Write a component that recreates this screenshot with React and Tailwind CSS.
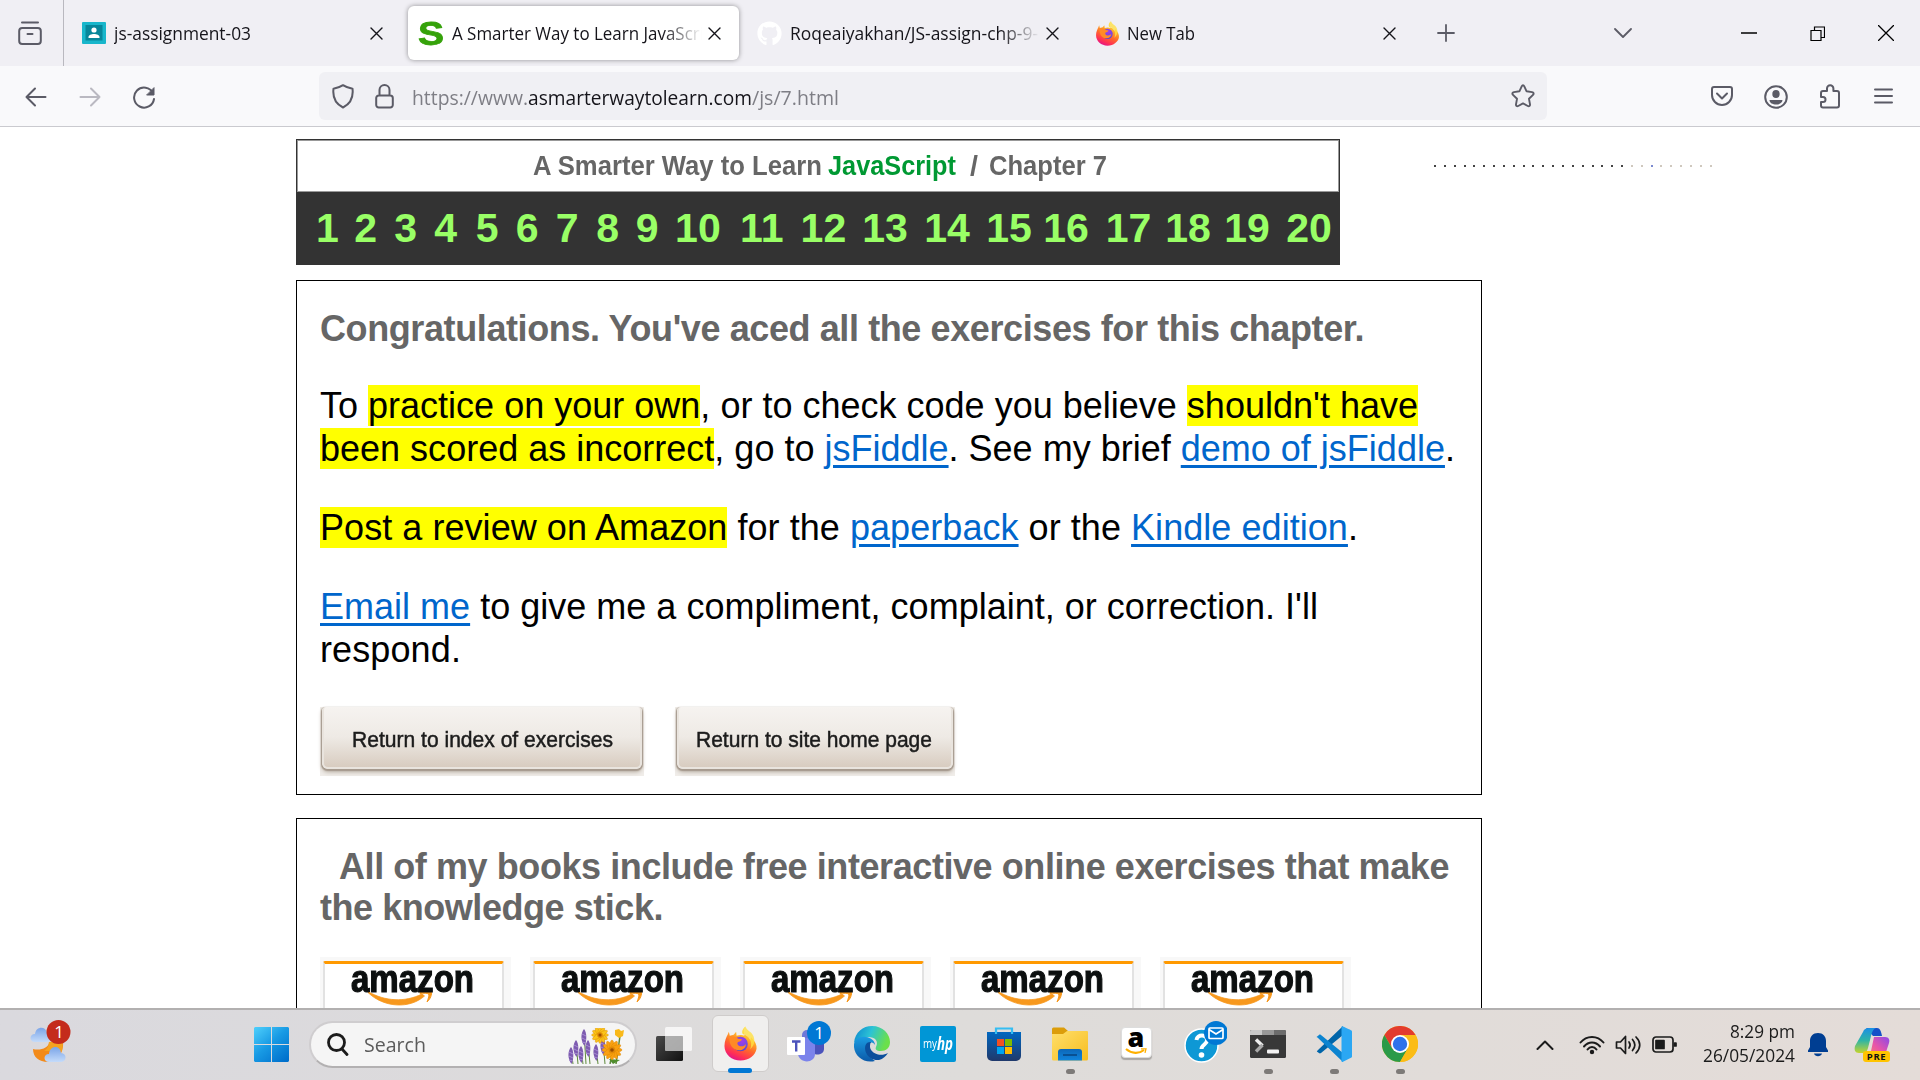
import React, { useLayoutEffect, useRef, useState } from "react";
import { FaGithub } from "react-icons/fa";

/* Text run set to a fixed width, by tracking or by horizontal stretch. */
function Fit({ w, stretch, className = "", children }) {
  const ref = useRef(null);
  const [style, setStyle] = useState({});
  useLayoutEffect(() => {
    const el = ref.current;
    const natural = el.getBoundingClientRect().width;
    if (stretch) setStyle({ transform: `scaleX(${w / natural})` });
    else setStyle({ letterSpacing: `${(w - natural) / el.textContent.length}px` });
  }, [w, stretch]);
  return (
    <span className={`block shrink-0 whitespace-pre ${className}`} style={{ width: w }}>
      <span ref={ref} className="inline-block origin-left" style={style}>{children}</span>
    </span>
  );
}

function Icon({ w, h, box, className = "", children, sw = 1.8 }) {
  return (
    <svg width={w} height={h} viewBox={box || `0 0 ${w} ${h}`} preserveAspectRatio="none" fill="none" stroke="currentColor" strokeWidth={sw} strokeLinecap="round" strokeLinejoin="round" className={`block shrink-0 ${className}`}>
      {children}
    </svg>
  );
}

function Firefox({ size, id }) {
  return (
    <svg width={size} height={size} viewBox="0 0 36 36" className="block shrink-0">
      <defs>
        <linearGradient id={id} x1="0.8" y1="0" x2="0.35" y2="1">
          <stop offset="0" stopColor="#fff44f" />
          <stop offset="0.35" stopColor="#ffb02a" />
          <stop offset="0.6" stopColor="#ff6a2a" />
          <stop offset="0.85" stopColor="#ff2f55" />
          <stop offset="1" stopColor="#e31587" />
        </linearGradient>
        <radialGradient id={id + "b"} cx="0.6" cy="0.3" r="0.8">
          <stop offset="0" stopColor="#a33be8" />
          <stop offset="0.6" stopColor="#6a4be0" />
          <stop offset="1" stopColor="#4a3fb8" />
        </radialGradient>
      </defs>
      <path d="M23 .5c-3 3-3.500 6-2 8 4 1 6 3 7 6l1-3c4 4 6 8 5.500 12C33.500 30 27 35.500 18 35.500S1.500 29 1.500 20.500c0-5 2-9 3.500-12L6 6l1 4 4-1 2.500-3 .5 4c3-1 6-1 8 0-1-4-1-7 1-9.500z" fill={`url(#${id})`} />
      <circle cx="18" cy="18.500" r="7.500" fill={`url(#${id}b)`} />
      <path d="M6.500 11c3-1 7 0 9 2l4 .5c-.5 2-3 2.500-4 3-1 1-1 2.500.5 3.500 3 2 6 .5 7.500-1.500 0 4-3 6.500-7 6.500C10 25 6 19 6.500 11z" fill="#ff8a26" />
      <path d="M20 8c7 2 11 8 8 16 6-5 5-13 1-17-3-2-5-4-6-6.500C20 3 19 6 20 8z" fill="#ffe045" opacity=".8" />
    </svg>
  );
}

function Tab({ active, icon, title, w, fade }) {
  return (
    <div className={`mr-[7px] flex h-[54px] w-[331px] items-center rounded-[6px] pl-3 ${active ? "bg-white shadow-[0_0_5px_rgba(0,0,0,0.4)]" : ""}`}>
      <div className="flex w-6 justify-center">{icon}</div>
      <div className={`ml-2 w-[250px] overflow-hidden leading-6 ${fade ? "[mask-image:linear-gradient(to_right,black_84%,transparent_100%)]" : ""}`}>
        <Fit w={w} stretch className="text-[17.500px]">{title}</Fit>
      </div>
      <Icon w={13} h={13} className="ml-[6px] text-[#15141a]" sw={1.4}>
        <path d="M1 1l11 11M12 1L1 12" />
      </Icon>
    </div>
  );
}

function TabStrip() {
  return (
    <div className="flex h-[66px] items-center bg-[#f0eff4]">
      <div className="flex h-full w-16 items-center border-r border-[#b9b8bf] pl-[18px]">
        <Icon w={24} h={24} className="text-[#5b5b66]" sw={2}>
          <path d="M4 1.500h16M1.200 10a3 3 0 0 1 3-3h15.600a3 3 0 0 1 3 3v10a3 3 0 0 1-3 3H4.200a3 3 0 0 1-3-3zM9.500 13h5" />
        </Icon>
      </div>
      <div className="ml-[6px] flex">
        <Tab
          title="js-assignment-03"
          w={137}
          icon={
            <svg width="24" height="22" viewBox="0 0 24 22">
              <rect width="24" height="22" rx="1" fill="#18b6cb" />
              <rect x="3.500" y="3" width="17" height="15.500" fill="#07869a" />
              <circle cx="12" cy="8" r="2.600" fill="#fff" />
              <path d="M6.500 15c0-4 11-4 11 0v1h-11z" fill="#fff" />
            </svg>
          }
        />
        <Tab active fade title="A Smarter Way to Learn JavaScri" w={252} icon={<Fit w={26} stretch className="-ml-[2px] text-[34px] leading-6 font-bold text-[#35a20a] [-webkit-text-stroke:0.8px_#35a20a] [font-family:'Liberation_Sans',sans-serif]">S</Fit>} />
        <Tab fade title="Roqeaiyakhan/JS-assign-chp-9-1" w={258} icon={<FaGithub size={25} color="#fff" className="-ml-[2px]" />} />
        <div className="-ml-px">
          <Tab title="New Tab" w={68} icon={<Firefox size={25} id="ffa" />} />
        </div>
      </div>
      <Icon w={18} h={18} className="ml-[16px] text-[#5b5b66]"><path d="M9 1v16M1 9h16" /></Icon>
      <Icon w={18} h={10} className="ml-[159px] text-[#5b5b66]"><path d="M1 1l8 8 8-8" /></Icon>
      <Icon w={16} h={2} className="ml-[109px] text-black" sw={1.3}><path d="M0 1h16" /></Icon>
      <Icon w={15} h={15} className="ml-[53px] text-black" sw={1.2}><path d="M1 4.500h10v10H1zM4.500 4.500v-3.500h10v10.500H11" strokeLinejoin="miter" /></Icon>
      <Icon w={16} h={16} className="ml-[53px] text-black" sw={1.3}><path d="M.5.5l15 15M15.500.5l-15 15" /></Icon>
    </div>
  );
}

function Toolbar() {
  return (
    <div className="flex h-[61px] items-center border-b border-[#cacacf] bg-[#f9f9fb] text-[#5b5b66]">
      <Icon w={22} h={20} className="mt-[2px] ml-[25px]" sw={2}><path d="M1.500 10h19M10 1.500L1.500 10l8.500 8.500" /></Icon>
      <Icon w={22} h={20} className="mt-[2px] ml-[32px] text-[#bab9c1]" sw={2}><path d="M1.500 10h19M12 1.500l8.500 8.500-8.500 8.500" /></Icon>
      <Icon w={24} h={24} className="mt-[3px] ml-[31px]" sw={2}>
        <path d="M21 7a10 10 0 1 0 1 6" />
        <path d="M22 2v7h-7z" fill="currentColor" strokeWidth="1" />
      </Icon>
      <div className="ml-[163px] flex h-12 w-[1228px] items-center rounded-[6px] bg-[#f0f0f4]">
        <Icon w={22} h={25} className="ml-[13px]" sw={2}><path d="M11 1.200c3 2 6 3 9.500 3.500C21.500 13 18 20 11 23.500 4 20 .5 13 1.500 4.700 5 4.200 8 3.200 11 1.200z" /></Icon>
        <Icon w={19} h={25} className="ml-[21px]" sw={2}><path d="M1.200 14a2.500 2.500 0 0 1 2.500-2.500h11.600a2.500 2.500 0 0 1 2.500 2.500v7a2.500 2.500 0 0 1-2.500 2.500H3.700A2.500 2.500 0 0 1 1.200 21zM4.500 11V6a5 5 0 0 1 10 0v5" /></Icon>
        <div className="mt-[3px] ml-[18px] flex text-[20px] leading-8 text-[#7e7e85]">
          <Fit w={116} stretch>https://www.</Fit>
          <Fit w={224} stretch className="text-[#15141a]">asmarterwaytolearn.com</Fit>
          <Fit w={87} stretch>/js/7.html</Fit>
        </div>
        <Icon w={24} h={24} className="mr-3 ml-auto" sw={1.900}><path d="M12 1.300c.6 0 1 .4 1.300 1l2.300 5 5.500.8c1.500.2 2 1.700.9 2.800l-4 3.900 1 5.600c.2 1.500-1 2.200-2.200 1.600L12 19.400 7.200 22c-1.200.6-2.400-.1-2.200-1.600l1-5.600-4-3.900c-1.100-1.100-.6-2.600.9-2.800l5.500-.8 2.300-5c.3-.6.7-1 1.300-1z" /></Icon>
      </div>
      <Icon w={22} h={20} className="ml-[164px]" sw={2}><path d="M3 1h16a2 2 0 0 1 2 2v6a10 10 0 0 1-20 0V3a2 2 0 0 1 2-2zM6 7.500l5 5 5-5" /></Icon>
      <Icon w={24} h={24} className="mt-px ml-[31px]" sw={2}>
        <circle cx="12" cy="12" r="10.800" />
        <ellipse cx="12" cy="9" rx="3.700" ry="4" fill="currentColor" stroke="none" />
        <path d="M5.500 15h13c0 6-13 6-13 0z" fill="currentColor" stroke="none" />
      </Icon>
      <Icon w={22} h={25} className="ml-[31px]" sw={2}><path d="M2 13V9a2 2 0 0 1 2-2h4V4.500a3.200 3.200 0 0 1 6.400 0V7H18a2 2 0 0 1 2 2v12.500a2 2 0 0 1-2 2H4a2 2 0 0 1-2-2V18h2a2.500 2.500 0 0 0 0-5z" /></Icon>
      <Icon w={19} h={16} className="ml-[33px]" sw={2}><path d="M1 1.500h17M1 8h17M1 14.500h17" /></Icon>
    </div>
  );
}

/* number, width of its cell */
const CHAPTERS = [
  [1, 38.300], [2, 40], [3, 40], [4, 41.500], [5, 40], [6, 40], [7, 40.500], [8, 39.500], [9, 39.300], [10, 65], [11, 60.500],
  [12, 61.600], [13, 62], [14, 62], [15, 57], [16, 62.500], [17, 59.500], [18, 59], [19, 62], [20, 49],
];

function ChapterHeader() {
  return (
    <div className="h-[126px] w-[1044px] border border-[#333] bg-[#333]">
      <div className="flex h-[52px] items-center border border-[#999] bg-white pl-[235px] text-[28px] leading-8 font-bold text-[#666]">
        <Fit w={289} stretch>A Smarter Way to Learn</Fit>
        <Fit w={128} stretch className="ml-[6px] text-[#009933]">JavaScript</Fit>
        <Fit w={8} stretch className="ml-[14px]">/</Fit>
        <Fit w={118} stretch className="ml-[11px]">Chapter 7</Fit>
      </div>
      <div className="flex h-[72px] items-center pl-[19px] text-[41px] leading-[72px] font-bold text-[#99ff66]">
        {CHAPTERS.map(([n, w]) => (
          <a key={n} className="shrink-0" style={{ width: w }}>{n}</a>
        ))}
      </div>
    </div>
  );
}

const Mark = ({ children }) => <span className="bg-[#ffff00]">{children}</span>;
const Link = ({ children }) => <a className="text-[#0066cc] underline decoration-[3px] underline-offset-[4px]">{children}</a>;

function StoneButton({ children, w, textW, pad }) {
  return (
    <div className="h-[69px] bg-[#f0ede9] px-[2px]" style={{ width: w }}>
      <div className="flex h-[62px] items-center rounded-b-[6px] rounded-t-[4px] border-x-2 border-b-2 border-[#e9e4de] bg-linear-to-b from-[#f6f3f0] via-[#eeeae5] to-[#d8ccc0] shadow-[0_1px_1px_0.5px_#a69a8e,0_3px_4px_#b5aa9e]" style={{ paddingLeft: pad }}>
        <Fit w={textW} stretch className="pt-[5px] text-[22.500px] leading-7 text-[#1c1c1c] [-webkit-text-stroke:0.5px_#1c1c1c]">{children}</Fit>
      </div>
    </div>
  );
}

function AmazonBadge() {
  return (
    <div className="h-[51px] w-[191px] overflow-hidden bg-[#f8f8f8] pt-1 pl-[3px]">
      <div className="h-[60px] w-[181px] rounded-[2px] border-x-2 border-t-[3px] border-x-[#e2e2e2] border-t-[#ff9900] bg-white pl-[26px]">
        <Fit w={123} stretch className="mt-[-1px] h-[27px] text-[38px] leading-[32px] font-bold text-[#0c0f0f] [-webkit-text-stroke:1.2px_#0c0f0f]">amazon</Fit>
        <svg width="66" height="17" viewBox="0 0 66 17" className="ml-[17px] block">
          <path d="M0 1.500c17 10 37 11 54 2.500l2.500 2C42 19 16 18 0 2.500z" fill="#f7981d" stroke="#f7981d" strokeWidth=".8" />
          <path d="M52 2c5-2.500 11-2 11.500-.5.500 3-1 7.500-4.500 10.500 1.500-4 2.500-7 1.500-8-1-1-5-.8-8.500-.5z" fill="#f7981d" stroke="#f7981d" />
        </svg>
      </div>
    </div>
  );
}

function Page() {
  return (
    <div className="h-[881px] overflow-hidden bg-white pt-3 pl-[296px] [font-family:'Liberation_Sans',Arial,sans-serif]">
      <div className="flex">
        <ChapterHeader />
        <div className="mt-[26px] ml-[94px] flex h-[2px] w-[278px] justify-between">
          {Array.from({ length: 29 }, (_, i) => (
            <i key={i} className={`h-[2px] w-[2px] ${i < 20 ? "bg-[#444]" : i === 22 ? "bg-[#7b8ad0]" : "bg-[#cfc8be]"}`} />
          ))}
        </div>
      </div>
      <div className="mt-[15px] h-[515px] w-[1186px] border border-black pt-[26px] pl-[23px]">
        <h2 className="pt-px text-[36px] leading-[41px] font-bold text-[#666]">
          <Fit w={1044}>Congratulations. You've aced all the exercises for this chapter.</Fit>
        </h2>
        <div className="mt-[35px] flex flex-col gap-9 text-[36px] leading-[43px] text-black">
          <div>
            <Fit w={1098}>To <Mark>practice on your own</Mark>, or to check code you believe <Mark>shouldn't have</Mark></Fit>
            <Fit w={1135}><Mark>been scored as incorrect</Mark>, go to <Link>jsFiddle</Link>. See my brief <Link>demo of jsFiddle</Link>.</Fit>
          </div>
          <Fit w={1038}><Mark>Post a review on Amazon</Mark> for the <Link>paperback</Link> or the <Link>Kindle edition</Link>.</Fit>
          <div>
            <Fit w={998}><Link>Email me</Link> to give me a compliment, complaint, or correction. I'll</Fit>
            <Fit w={141}>respond.</Fit>
          </div>
        </div>
        <div className="mt-9 flex gap-[31px]">
          <StoneButton w={324} textW={261} pad={28}>Return to index of exercises</StoneButton>
          <StoneButton w={280} textW={236} pad={17}>Return to site home page</StoneButton>
        </div>
      </div>
      <div className="mt-[23px] h-[300px] w-[1186px] border border-black pt-[26px] pl-[23px]">
        <h2 className="pt-px text-[36px] leading-[41px] font-bold text-[#666]">
          <Fit w={1110} className="ml-[19px]">All of my books include free interactive online exercises that make</Fit>
          <Fit w={343}>the knowledge stick.</Fit>
        </h2>
        <div className="mt-[29px] flex gap-[19px]">
          {[1, 2, 3, 4, 5].map((n) => <AmazonBadge key={n} />)}
        </div>
      </div>
    </div>
  );
}

const Slot = ({ children, running }) => (
  <div className="relative flex h-14 w-[66px] items-center justify-center">
    {children}
    {running && <span className="absolute -bottom-[2px] h-[5px] w-[9px] rounded-full bg-[#7d7a78]" />}
  </div>
);

const petals = [0, 30, 60, 90, 120, 150];
function Flower({ x, y, r, c }) {
  return (
    <g transform={`translate(${x} ${y})`}>
      {petals.map((a) => <ellipse key={a} rx={r} ry={r * 0.27} transform={`rotate(${a})`} fill={c} stroke="#d98600" strokeWidth=".4" />)}
      <circle r={r * 0.33} fill="#e08a08" />
      <circle r={r * 0.18} fill="#9a4d00" />
    </g>
  );
}

function SearchBox() {
  return (
    <div className="ml-[20px] flex h-[47px] w-[328px] items-center rounded-full border-2 border-[#cfcdcf] border-b-[#b3b1b2] bg-[#f5f5f5] pl-[15px]">
      <Icon w={23} h={23} className="text-[#1b1b1b]" sw={2.800}><circle cx="10.500" cy="9.500" r="8" /><path d="M16 16l5 5.500" /></Icon>
      <Fit w={62} stretch className="ml-[15px] text-[20px] leading-7 text-[#5c5c5c]">Search</Fit>
      <svg width="60" height="36" viewBox="0 0 60 36" className="mt-[3px] ml-[141px] block">
        {[[4, 22], [9, 15], [17, 4], [14, 21], [21, 15], [29, 19], [36, 13]].map(([x, y], i) => (
          <g key={i}>
            <path d={`M${x} ${y}L${x + 2} 36`} stroke="#5f8a3c" strokeWidth="1" />
            <path d={`M${x} ${y - 3}c3 3 3 12 .5 17-4-5-4-13-.5-17z`} fill="#7d5bb0" />
            <path d={`M${x - 2} ${y + 2}l4 2M${x - 2} ${y + 6}l4 2M${x - 2} ${y + 10}l4 1`} stroke="#a58ad2" strokeWidth="1" />
          </g>
        ))}
        <path d="M46 22l-3 14M53 8l-4 28" stroke="#5f8a3c" strokeWidth="1.500" />
        <path d="M42 31l4 5 7-4" fill="#4f8d2d" />
        <Flower x={33} y={7} r={8.500} c="#fbc418" />
        <path d="M48 2l4-1 2 2 3-1-1 6-4 2-4-3z" fill="#f9b91a" />
        <Flower x={45} y={22} r={10} c="#f9a010" />
      </svg>
    </div>
  );
}

function TaskIcons() {
  return (
    <div className="mb-[2px] ml-[4px] flex items-center">
      <Slot>
        <svg width="36" height="35" viewBox="0 0 36 35">
          <defs>
            <linearGradient id="tv" x1="0" y1="0" x2="1" y2="1"><stop stopColor="#4a4a4a" /><stop offset="1" stopColor="#111" /></linearGradient>
          </defs>
          <rect y="10" width="27" height="25" rx="1.500" fill="url(#tv)" />
          <rect x="9" y="1" width="27" height="24" rx="1.500" fill="#fff" opacity=".72" />
          <path d="M9 10h18v15H9z" fill="#999" opacity=".55" />
        </svg>
      </Slot>
      <div className="relative flex h-14 w-[66px] items-center justify-center">
        <div className="flex h-[57px] w-[57px] items-center justify-center rounded-[6px] border border-[#cfcccb] bg-[#f0efee]"><Firefox size={35} id="ffb" /></div>
        <span className="absolute -bottom-[1px] h-[5px] w-6 rounded-full bg-[#0078d4]" />
      </div>
      <Slot>
        <svg width="46" height="46" viewBox="0 0 46 46" className="mb-[5px] ml-[4px]">
          <path d="M27 18h12v13c0 7-12 7-12 2z" fill="#4b53bc" />
          <rect x="17" y="12" width="14" height="13" rx="5" fill="#6f78d8" />
          <path d="M13 20h17v16c0 10-17 10-17-1z" fill="#7b83eb" />
          <rect x="2" y="19" width="18" height="18" rx="1" fill="#fff" />
          <path d="M7 23.500h8.500M11.200 23.500v10" stroke="#4b53bc" strokeWidth="2.400" />
          <circle cx="34" cy="15" r="12" fill="#0078d4" />
          <text x="34" y="21" textAnchor="middle" fill="#fff" fontSize="17" fontFamily="Open Sans">1</text>
        </svg>
      </Slot>
      <Slot>
        <svg width="36" height="36" viewBox="0 0 36 36">
          <defs>
            <linearGradient id="e1" x1="0" y1="0" x2="1" y2=".3"><stop stopColor="#0a84d0" /><stop offset=".5" stopColor="#2cc3d5" /><stop offset="1" stopColor="#6be04b" /></linearGradient>
            <linearGradient id="e2" x1="0" y1="0" x2="0" y2="1"><stop stopColor="#1b9de2" /><stop offset="1" stopColor="#0b59a8" /></linearGradient>
          </defs>
          <path d="M0 17C1 6 9 0 18 0c11 0 18 8 18 16 0 6-4 9-9 9-5 0-6-2-5-4 3-6-1-10-8-10C7 11 2 14 0 17z" fill="url(#e1)" />
          <path d="M0 18c1-5 6-8 12-7 5 .5 9 4 9 8-1-2-3-3-5-2-5 2-4 12 5 18C9 38-1 29 0 18z" fill="url(#e2)" />
          <path d="M13 17c-5 5 0 18 12 17 4-1 7-4 9-7-7 4-17 1-18-6 0-2 0-3 1-5-1 0-3 0-4 1z" fill="#0c4f9c" />
        </svg>
      </Slot>
      <Slot>
        <div className="flex h-9 w-9 items-center rounded-[2px] bg-[#0096d6] pl-[3px] text-white">
          <Fit w={14} stretch className="text-[12px] leading-4">my</Fit>
          <Fit w={16} stretch className="text-[17px] leading-5 font-bold italic">hp</Fit>
        </div>
      </Slot>
      <Slot>
        <svg width="36" height="36" viewBox="0 0 36 36">
          <defs><linearGradient id="st" x1="0" y1="0" x2="0" y2="1"><stop stopColor="#0067c0" /><stop offset="1" stopColor="#20396b" /></linearGradient></defs>
          <path d="M10 8V2.500h16V8" fill="none" stroke="#35bdf2" strokeWidth="2.200" />
          <path d="M1 6h34v24a5 5 0 0 1-5 5H6a5 5 0 0 1-5-5z" fill="url(#st)" />
          <path d="M10 8V5.500M26 8V5.500" stroke="#35bdf2" strokeWidth="2.200" />
          <path d="M11 13h7v7h-7z" fill="#f25022" /><path d="M19 13h7v7h-7z" fill="#7fba00" /><path d="M11 21h7v7h-7z" fill="#00a4ef" /><path d="M19 21h7v7h-7z" fill="#ffb900" />
        </svg>
      </Slot>
      <Slot running>
        <svg width="36" height="34" viewBox="0 0 36 34">
          <defs>
            <linearGradient id="fo" x1="0" y1="0" x2="1" y2="1"><stop stopColor="#ffdf6b" /><stop offset="1" stopColor="#f7bd1f" /></linearGradient>
            <linearGradient id="fb" x1="0" y1="0" x2="0" y2="1"><stop stopColor="#0d67b8" /><stop offset="1" stopColor="#1085dd" /></linearGradient>
          </defs>
          <path d="M0 2a1.500 1.500 0 0 1 1.500-1.500H12L16 4v6H0z" fill="#dc9d0a" />
          <path d="M0 7h11l4-3h20a1 1 0 0 1 1 1v27a1.500 1.500 0 0 1-1.500 1.500h-33A1.500 1.500 0 0 1 0 32z" fill="url(#fo)" />
          <path d="M6 33.500V25a3 3 0 0 1 3-3h18a3 3 0 0 1 3 3v8.500z" fill="url(#fb)" />
          <path d="M11 28h14" stroke="#08457f" strokeWidth="1.500" />
        </svg>
      </Slot>
      <Slot>
        <div className="mb-[3px] flex h-[31px] w-[31px] flex-col items-center rounded-[4px] border border-[#ddd] bg-white shadow-[0_2px_1px_#a9a6a4]">
          <span className="mt-[-3px] h-[23px] text-[27px] leading-[23px] font-black text-black">a</span>
          <svg width="22" height="8" viewBox="0 0 22 8" className="block"><path d="M1 1c6 5 13 5 18 1" stroke="#ffb000" strokeWidth="2.200" fill="none" /><path d="M16 .8h5l-1 4" stroke="#ffb000" strokeWidth="1.300" fill="none" /></svg>
        </div>
      </Slot>
      <Slot>
        <svg width="46" height="46" viewBox="0 0 46 46" className="mb-[5px] ml-[4px]">
          <circle cx="20.500" cy="27.500" r="16.500" fill="#0e98d5" stroke="#fff" strokeWidth="1.500" />
          <path d="M15.500 22c.5-6 11-6 10.500.5 0 4-5.500 4-5.500 8.500" fill="none" stroke="#fff" strokeWidth="4" />
          <circle cx="20.500" cy="37" r="2.800" fill="#fff" />
          <circle cx="35" cy="15" r="12" fill="#0078d4" />
          <rect x="28" y="10" width="14" height="10.500" rx="1" fill="none" stroke="#fff" strokeWidth="1.700" />
          <path d="M28 11.500l7 4.500 7-4.500" fill="none" stroke="#fff" strokeWidth="1.700" />
        </svg>
      </Slot>
      <Slot running>
        <svg width="36" height="28" viewBox="0 0 36 28">
          <rect width="36" height="28" rx="1.500" fill="#383838" />
          <path d="M0 5V1.500A1.500 1.500 0 0 1 1.500 0H12v5z" fill="#c9c9c9" /><path d="M12 0h12v5H12z" fill="#989898" /><path d="M24 0h10.500A1.500 1.500 0 0 1 36 1.500V5H24z" fill="#6c6c6c" />
          <path d="M6 9.500l6.500 6.300" stroke="#ededed" strokeWidth="3.400" /><path d="M12.500 15L6 21.500" stroke="#a8a8a8" strokeWidth="3.400" />
          <rect x="17" y="19.500" width="12" height="4" rx="1" fill="#f2f2f2" />
        </svg>
      </Slot>
      <Slot running>
        <svg width="36" height="36" viewBox="0 0 36 36">
          <path d="M1.500 24.500L27 0v9L5 27c-1 .7-1.500.5-2 0L.8 25.500z" fill="#0065a9" />
          <path d="M1.500 11.500L27 36v-9L5 9c-1-.7-1.500-.5-2 0L.5 11z" fill="#0c84d0" />
          <path d="M26 .3c1 0 8.500 3.700 9.500 4.200.3.200.5.500.5 1v25c0 .5-.2.800-.5 1L26.500 36c-.8 0-1-.5-1-1V1c0-.4.1-.7.500-.7z" fill="#2ba7f3" />
        </svg>
      </Slot>
      <Slot running>
        <svg width="36" height="36" viewBox="0 0 36 36">
          <circle cx="18" cy="18" r="18" fill="#fbbc16" />
          <path d="M18 9h15.600A18 18 0 0 0 2.400 9l7.800 13.500z" fill="#e33b2e" />
          <path d="M2.400 9A18 18 0 0 0 18 36l7.800-13.500L10.200 22.500z" fill="#2a9a48" />
          <path d="M18 9H33.600A18 18 0 0 1 18 36l7.800-13.500z" fill="#fbbc16" />
          <circle cx="18" cy="18" r="9" fill="#fff" /><circle cx="18" cy="18" r="7.200" fill="#2f72ea" />
        </svg>
      </Slot>
    </div>
  );
}

function Taskbar() {
  return (
    <div className="flex h-[72px] items-center border-t-2 border-[#b2b0b0] bg-linear-to-r from-[#dad9de] via-[#dedcda] to-[#e4dcd8] pb-px">
      <svg width="46" height="46" viewBox="0 0 46 46" className="mb-[8px] ml-[27px] block shrink-0">
        <defs><linearGradient id="cl" x1="0" y1="0" x2="0" y2="1"><stop stopColor="#7ba5e8" /><stop offset="1" stopColor="#c4dbfa" /></linearGradient></defs>
        <path d="M8 24c-6 0-6-8 0-8 1-8 11-8 12-1 5 0 5 9 0 9z" fill="url(#cl)" />
        <path d="M6 31c7 2 16-1 16-7 5-1 10-1 14 0 1 11-6 20-15 20S6 39 6 31z" fill="#f28a1a" />
        <path d="M22 24h14l-1 9H17c3-2 5-5 5-9z" fill="#f5a722" opacity=".8" />
        <path d="M22 44c-6 0-6-8 0-8 1-9 11-9 12-1 6 0 6 9 0 9z" fill="url(#cl)" />
        <circle cx="31.500" cy="14" r="12" fill="#c42b1c" />
        <text x="32" y="20" textAnchor="middle" fill="#fff" fontSize="17" fontFamily="Open Sans">1</text>
      </svg>
      <svg width="35" height="35" viewBox="0 0 35 35" className="ml-[181px] block shrink-0">
        <defs><linearGradient id="wi" gradientUnits="userSpaceOnUse" x1="0" y1="0" x2="30" y2="35"><stop stopColor="#4fd0fc" /><stop offset=".5" stopColor="#189ae4" /><stop offset="1" stopColor="#0070cc" /></linearGradient></defs>
        <path d="M1 0h16v17H0V1zM18 0h16l1 1v16H18zM0 18h17v17H1l-1-1zM18 18h17v16l-1 1H18z" fill="url(#wi)" />
      </svg>
      <SearchBox />
      <TaskIcons />
      <Icon w={18} h={10} className="ml-[103px] text-[#1b1b1b]" sw={2}><path d="M1.500 9L9 1.500 16.500 9" /></Icon>
      <Icon w={26} h={20} className="ml-[25px] text-[#1b1b1b]" sw={2}>
        <path d="M1.500 7.500c6-7.500 17-7.500 23 0M5 11.500c4.500-5.500 11.500-5.500 16 0M8.500 14.500c2.500-3.500 6.500-3.500 9 0" /><circle cx="13" cy="17" r="1.200" fill="currentColor" />
      </Icon>
      <Icon w={26} h={20} className="ml-[10px] text-[#1b1b1b]" sw={1.700}>
        <path d="M1.500 7h4l5-5.500v17L5.500 13h-4zM14 7c1.500 2 1.500 4 0 6M17.500 4.500c3 3.500 3 7.500 0 11M21 2c5 5 5 11 0 16" />
      </Icon>
      <Icon w={25} h={17} className="ml-[11px] text-[#1b1b1b]" sw={1.700}>
        <rect x="1" y="1" width="20" height="15" rx="3" /><path d="M4 4.500h8v8H4z" fill="currentColor" /><path d="M22.500 7h1.500v3h-1.500z" fill="currentColor" />
      </Icon>
      <div className="mb-[3px] ml-[25px] flex w-[93px] flex-col items-end text-[17.500px] leading-6 text-[#1b1b1b]">
        <Fit w={65} stretch>8:29 pm</Fit>
        <Fit w={92} stretch>26/05/2024</Fit>
      </div>
      <svg width="20" height="24" viewBox="0 0 20 24" className="ml-[13px] block shrink-0"><path d="M10 0c5 0 8 3.500 8 8v6l2 3.500V19H0v-1.500L2 14V8c0-4.500 3-8 8-8zM6 20.500h8c-1 3.500-7 3.500-8 0z" fill="#003e92" /></svg>
      <svg width="36" height="36" viewBox="0 0 36 36" className="ml-[26px] block shrink-0">
        <defs>
          <linearGradient id="c1" x1="0" y1="0" x2="0" y2="1"><stop stopColor="#1b8fe6" /><stop offset=".5" stopColor="#2fb5a5" /><stop offset="1" stopColor="#c5d42c" /></linearGradient>
          <linearGradient id="c2" x1="1" y1="0" x2="0" y2="1"><stop stopColor="#8a49e8" /><stop offset=".5" stopColor="#e854a8" /><stop offset="1" stopColor="#ff8b5a" /></linearGradient>
        </defs>
        <path d="M12 1h11c3 0 4 3 5 8h-9z" fill="#1450c8" />
        <path d="M9 5c1-3 3-4 6-4h7c-3 1-4 4-5 8l-3 12c-1 4-3 5-6 5H5c-4 0-5-3-4-7z" fill="url(#c1)" />
        <path d="M20 10h11c4 0 5 3 4 6l-3 9c-1 4-4 6-7 6H12c3-1 4-3 5-7z" fill="url(#c2)" />
        <rect x="9" y="24" width="27" height="11" rx="3" fill="#ffc400" />
        <text x="22.500" y="32.800" textAnchor="middle" fill="#111" fontSize="9.500" fontWeight="700" fontFamily="Open Sans" letterSpacing=".6">PRE</text>
      </svg>
    </div>
  );
}

export default function App() {
  return (
    <div className="h-[1080px] w-[1920px] overflow-hidden text-[#15141a] [font-family:'Open_Sans','Noto_Sans',sans-serif]">
      <TabStrip />
      <Toolbar />
      <Page />
      <Taskbar />
    </div>
  );
}
